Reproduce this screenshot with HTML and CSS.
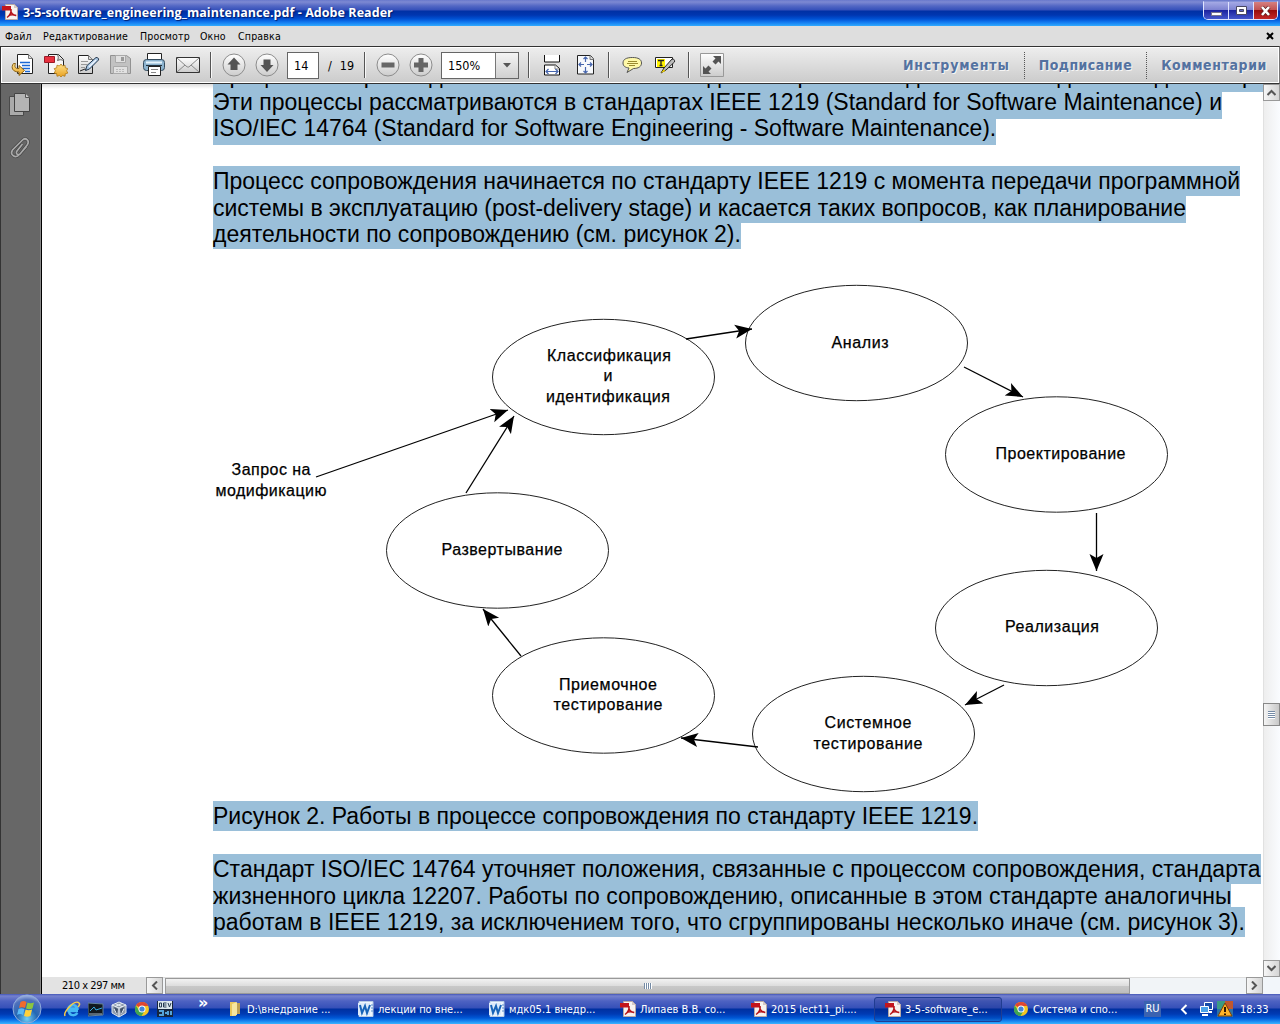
FILE: index.html
```html
<!DOCTYPE html>
<html lang="ru">
<head>
<meta charset="utf-8">
<title>3-5-software_engineering_maintenance.pdf - Adobe Reader</title>
<link rel="stylesheet" href="styles.css">
</head>
<body>
<svg class="defs" width="0" height="0">
  <defs>
    <linearGradient id="gray" x1="0" y1="0" x2="0" y2="1"><stop offset="0" stop-color="#fff"/><stop offset="1" stop-color="#ccc"/></linearGradient>
    <linearGradient id="gold" x1="0" y1="0" x2="0" y2="1"><stop offset="0" stop-color="#ffe28a"/><stop offset="1" stop-color="#e8a020"/></linearGradient>
    <radialGradient id="orb" cx=".5" cy=".85" r=".9"><stop offset="0" stop-color="#6fd0f8"/><stop offset=".4" stop-color="#2467b4"/><stop offset=".75" stop-color="#4f70bc"/><stop offset="1" stop-color="#c4d0f0"/></radialGradient>
    <symbol id="pdf" viewBox="0 0 16 16"><path d="M3.5.5h9l3 3v12h-12z" fill="#f7f3f0" stroke="#b9a9a5"/><path d="M12 .5v3.5h3.500z" fill="#d4c8c4"/><path d="M0 2h9v4.500H0z" fill="#c3151c"/><path d="M5 13.500c3-2 4.500-5 4-8.500M8.800 6c0 3 2.500 5 5.500 5.500M6 12.500c2-2 5-2 8-1" fill="none" stroke="#b51218" stroke-width="1.500"/></symbol>
    <symbol id="word" viewBox="0 0 16 16"><path d="M1 .5h14v15H1z" fill="#eef5fd" stroke="#b7cbe4"/><path d="M0 2h12v12H0z" fill="#dceafa"/><path d="M2 4l2 8 3-7 2 7 3-8" fill="none" stroke="#1763b8" stroke-width="2"/><path d="M13 4h2M13 7h2M13 10h2" stroke="#5c91ce"/></symbol>
    <symbol id="chrome" viewBox="0 0 16 16"><circle cx="8" cy="8" r="7" fill="#f3c623"/><path d="M8 8L2 4.300A7 7 0 0 1 14.300 5H8z" fill="#df4632"/><path d="M1.800 4.600A7 7 0 0 0 7.500 15l3.200-5.500L8 8 5 9.500z" fill="#3fa652"/><circle cx="8" cy="8" r="3.500" fill="#fff"/><circle cx="8" cy="8" r="2.600" fill="#4285d8"/></symbol>
  </defs>
</svg>
<div class="window">
  <header class="titlebar">
    <svg class="app-icon" width="16" height="16"><use href="#pdf"/></svg>
    <h1>3-5-software_engineering_maintenance.pdf - Adobe Reader</h1>
    <div class="win-buttons">
      <span class="wb"><svg width="24" height="17"><rect x="7.500" y="10.500" width="10" height="3" fill="#fff" stroke="#77738e"/></svg></span>
      <span class="wb"><svg width="24" height="17"><path d="M7.500 4.500h10v8h-10z" fill="#fff" stroke="#4a4862"/><path d="M10.500 7.500h4v2h-4z" fill="#5a64c0" stroke="#4a4862"/></svg></span>
      <span class="wb close"><svg width="23" height="17"><path d="M8 5l7 8M15 5l-7 8" stroke="#5d2020" stroke-width="4"/><path d="M8 5l7 8M15 5l-7 8" stroke="#fff" stroke-width="2.600"/></svg></span>
    </div>
  </header>
  <nav class="menubar">
    <span class="m1">Файл</span><span class="m2">Редактирование</span><span class="m3">Просмотр</span><span class="m4">Окно</span><span class="m5">Справка</span>
    <svg class="doc-close" width="8" height="8"><path d="M1 1l6 6M7 1L1 7" stroke="#000" stroke-width="2"/></svg>
  </nav>
  <div class="toolbar">
    <div class="tools files">
      <svg width="24" height="24"><path d="M6.500 1.500h11l4 4v15h-15z" fill="#fff" stroke="#222"/><path d="M17.500 1.500v4h4" fill="#ddd" stroke="#777"/><path d="M9 9.500h10M11 12.500h8M10 15.500h9M14 18.500h5" stroke="#1c69d4" stroke-width="1.500"/><path d="M4.500 10.500h-2c-3 4-1 8.500 5.500 8.500v3.500l5.500-5-5.500-5v3c-3.500.5-5-1.500-3.500-5z" fill="url(#gold)" stroke="#8c6419"/></svg>
      <svg width="24" height="24"><path d="M4.500 1.500h10l5 5v14h-15z" fill="#f8f8f8" stroke="#222"/><path d="M13.500 1.500c1 2 1 4 0 6 2-1 4-1 6 0" fill="#ddd" stroke="#666"/><path d="M.5 3.500h10v6H.5z" fill="#e8313f" stroke="#9c1b28"/><path d="M17 11l1.600 2 2.400-.8.300 2.600 2.500.8-1.200 2.200 1.200 2.300-2.500.6-.3 2.600-2.400-.8-1.600 1.500-1.600-1.500-2.400.8-.3-2.600-2.500-.6 1.200-2.300-1.200-2.200 2.500-.8.300-2.600 2.400.8z" fill="url(#gold)" stroke="#b07a18" stroke-width=".8"/></svg>
      <svg width="24" height="24"><path d="M1.500 2.500h10l4 4v14h-14z" fill="url(#gray)" stroke="#222"/><path d="M11.500 2.500v4h4" fill="#ddd" stroke="#777"/><path d="M4 8.500h7M4 11.500h6M4 14.500h4" stroke="#999"/><path d="M3 18l5-2 2 1" fill="none" stroke="#222"/><path d="M8.500 17.500l1.500-5 9-8c2 0 3 1 2.500 2.500l-9 9z" fill="#a9c7e4" stroke="#26394d"/><path d="M12 14l7-7" stroke="#eef6ff" stroke-width="1.500"/></svg>
      <svg width="24" height="24"><path d="M.5 2.500h16l4 3v15H.5z" fill="#c2c2c2" stroke="#929292"/><path d="M5.500 2.500h10v7h-10zM3.500 13.500h14v7h-14z" fill="#e1e1e1" stroke="#aaa"/><path d="M11 4h3v4h-3z" fill="#999"/><path d="M6 16.500h9M6 18.500h9" stroke="#bbb" stroke-dasharray="2 1"/></svg>
      <svg width="24" height="24"><path d="M4.500.5h14v9h-14z" fill="#fff" stroke="#222"/><rect x=".5" y="6.500" width="21" height="11" rx="3" fill="#8cb3cf" stroke="#344b5d"/><path d="M3 9.500h16" stroke="#e6f4fc" stroke-width="2"/><path d="M3 12.500h16" stroke="#24333e"/><path d="M5.500 13.500h12v9h-12z" fill="#fff" stroke="#222"/><path d="M8 16.500h7M8 19.500h5" stroke="#888"/></svg>
      <svg width="26" height="24"><path d="M.5 4.500h23v15H.5z" fill="url(#gray)" stroke="#333"/><path d="M1 5l9 8c2 1.500 2.500 1.500 4 0l9-8M1 19l8-7M23 19l-8-7" fill="none" stroke="#888"/></svg>
    </div>
    <i class="sep"></i>
    <svg class="round" width="24" height="24"><circle cx="12" cy="12" r="11" fill="url(#gray)" stroke="#8c8c8c"/><path d="M12 4.500l6.500 7h-3V17h-7v-5.500h-3z" fill="#555"/></svg>
    <svg class="round second" width="24" height="24"><circle cx="12" cy="12" r="11" fill="url(#gray)" stroke="#8c8c8c"/><path d="M12 19l6.500-7h-3V6.500h-7V12h-3z" fill="#555"/></svg>
    <div class="page-no">14</div><div class="page-total"><span>/</span><span>19</span></div>
    <i class="sep s2"></i>
    <svg class="round" width="24" height="24"><circle cx="12" cy="12" r="11" fill="url(#gray)" stroke="#8c8c8c"/><path d="M5.500 9.500h13v5h-13z" fill="#666"/></svg>
    <svg class="round second" width="24" height="24"><circle cx="12" cy="12" r="11" fill="url(#gray)" stroke="#8c8c8c"/><path d="M9.500 5h5v4.500H19v5h-4.500V19h-5v-4.500H5v-5h4.500z" fill="#666"/></svg>
    <div class="zoom"><span>150%</span><b><svg width="8" height="5"><path d="M0 0h8L4 4.500z" fill="#555"/></svg></b></div>
    <i class="sep s3"></i>
    <svg class="fitw" width="18" height="22"><path d="M1.500 1v7h15V1" fill="#fff" stroke="#111"/><path d="M1.500 21v-10h11l4 3.500V21z" fill="#fff" stroke="#111"/><path d="M12 11v4h4" fill="none" stroke="#888"/><path d="M3 17.500h12M5.500 15L3 17.500 5.500 20M12.500 15l2.500 2.500-2.500 2.500" fill="none" stroke="#4766ae" stroke-width="1.200"/></svg>
    <svg class="fitp" width="18" height="22"><path d="M.5 1.500h13l3 3.500v15H.5z" fill="#f7f9fc" stroke="#222"/><path d="M13 1.500v4h3.500" fill="#ddd" stroke="#777"/><path d="M8.500 3v5M8.500 13v6M2 10.500h5M10 10.500h5M6.500 5l2-2 2 2M6.500 17l2 2 2-2M4 8.500l-2 2 2 2M13 8.500l2 2-2 2" fill="none" stroke="#4766ae" stroke-width="1.200"/></svg>
    <i class="sep s4"></i>
    <svg class="note" width="21" height="20"><path d="M10.500 2.500c6 0 9 2 9 5.500s-3 5.500-8 5.500L5 17.500l2-4.500c-4-.5-6-2-6-5 0-3.500 3-5.500 9.500-5.500z" fill="#fff9a8" stroke="#555"/><path d="M6 6.500h9M5 8.500h11M7 10.500h6" stroke="#9a8a30"/></svg>
    <svg class="mark" width="22" height="20"><path d="M.5 2.500h17v10H.5z" fill="#fff" stroke="#222"/><path d="M2 4h8v8H2z" fill="#fff200"/><path d="M3 5.500h6M6 5v6M4.500 10.500h3" stroke="#222" stroke-width="1.300"/><path d="M6 18l3-5 8-9c2 0 3 1 2.500 3L11 15z" fill="#bbb" stroke="#222"/><path d="M6 18l2.500-3.500 2 1.500z" fill="#f0d000"/></svg>
    <i class="sep s5"></i>
    <svg class="full" width="24" height="24"><path d="M.5.5h23v23H.5z" fill="url(#gray)" stroke="#999"/><path d="M21 3v8l-2.500-2.500-3 3-3-3 3-3L13 3zM3 21v-8l2.500 2.500 3-3 3 3-3 3L11 21z" fill="#555"/></svg>
    <div class="panels"><span class="t1">Инструменты</span><span class="t2">Подписание</span><span class="t3">Комментарии</span></div>
  </div>
  <main class="reader">
    <aside class="rail">
      <svg width="22" height="24"><path d="M.5 3.500h14v19H.5z" fill="#aaa" stroke="#4a4a4a"/><path d="M5.500.5h11l4 4v14h-15z" fill="#b4b4b4" stroke="#444"/><path d="M16.500.5v4h4" fill="#ccc" stroke="#555"/></svg>
      <svg class="clip" width="22" height="25"><path d="M13.500 8l-5.500 7c-2 3 1.500 5 3.500 2.500l7-9c2.500-4-2-7.500-5-4.500L3.500 14c-3 5 3 9 7 4.500l7-8" fill="none" stroke="#444" stroke-width="3"/><path d="M13.500 8l-5.500 7c-2 3 1.500 5 3.500 2.500l7-9c2.500-4-2-7.500-5-4.500L3.500 14c-3 5 3 9 7 4.500l7-8" fill="none" stroke="#aaa" stroke-width="1.700"/></svg>
    </aside>
    <div class="viewer">
      <article class="page">
        <div class="para first"><p class="l1">Процессы сопровождения обычно полностью должны решать задачи анализа для наладки и опроса</p><p class="l2">Эти процессы рассматриваются в стандартах IEEE 1219 (Standard for Software Maintenance) и</p><p class="l3">ISO/IEC 14764 (Standard for Software Engineering - Software Maintenance).</p></div>
        <div class="para"><p class="l4">Процесс сопровождения начинается по стандарту IEEE 1219 с момента передачи программной</p><p class="l5">системы в эксплуатацию (post-delivery stage) и касается таких вопросов, как планирование</p><p class="l6">деятельности по сопровождению (см. рисунок 2).</p></div>
        <svg class="diagram" width="1221" height="552" viewBox="42 249 1221 552">
          <defs><marker id="arrow" markerUnits="userSpaceOnUse" markerWidth="18" markerHeight="16" refX="17" refY="8" orient="auto"><path d="M0 1L17 8 0 15 4 8z"/></marker></defs>
          <g class="ovals"><ellipse cx="603.500" cy="377" rx="111" ry="57.700"/><ellipse cx="856.500" cy="343" rx="111" ry="57.700"/><ellipse cx="1056.500" cy="454.500" rx="111" ry="57.700"/><ellipse cx="1046.500" cy="628" rx="111" ry="57.700"/><ellipse cx="863.500" cy="734" rx="111" ry="57.700"/><ellipse cx="603.500" cy="695.500" rx="111" ry="57.700"/><ellipse cx="497.500" cy="550.500" rx="111" ry="57.700"/></g>
          <g class="arrows"><path d="M316 477L508 410"/><path d="M466 493L514 416"/><path d="M686 339L752 329"/><path d="M964 367L1023 397"/><path d="M1096.500 513V571"/><path d="M1004 685L965 705"/><path d="M758 747L681 738"/><path d="M521 656L483 609"/></g>
          <g class="labels">
            <text x="609" y="361" textLength="124">Классификация</text><text x="608" y="381">и</text><text x="608" y="402" textLength="124">идентификация</text>
            <text x="860" y="348" textLength="57">Анализ</text><text x="1060.500" y="459" textLength="130">Проектирование</text><text x="1052" y="632" textLength="94">Реализация</text>
            <text x="868" y="728" textLength="87">Системное</text><text x="868" y="748.500" textLength="109">тестирование</text>
            <text x="608" y="690" textLength="98">Приемочное</text><text x="608" y="710" textLength="109">тестирование</text>
            <text x="502" y="555" textLength="121">Развертывание</text><text x="271" y="475" textLength="79">Запрос на</text><text x="271" y="496" textLength="111">модификацию</text>
          </g>
        </svg>
        <div class="para caption"><p class="l7">Рисунок 2. Работы в процессе сопровождения по стандарту IEEE 1219.</p></div>
        <div class="para"><p class="l8">Стандарт ISO/IEC 14764 уточняет положения, связанные с процессом сопровождения, стандарта</p><p class="l9">жизненного цикла 12207. Работы по сопровождению, описанные в этом стандарте аналогичны</p><p class="l10">работам в IEEE 1219, за исключением того, что сгруппированы несколько иначе (см. рисунок 3).</p></div>
      </article>
      <div class="hbar">
        <span class="size">210 x 297 мм</span>
        <span class="sb"><svg width="7" height="9"><path d="M6 .5l-4 4 4 4" fill="none" stroke="#555" stroke-width="2"/></svg></span>
        <div class="htrack"><div class="hthumb"><i></i></div></div>
        <span class="sb"><svg width="7" height="9"><path d="M1 .5l4 4-4 4" fill="none" stroke="#555" stroke-width="2"/></svg></span>
      </div>
    </div>
    <div class="vbar">
      <span class="sb"><svg width="9" height="7"><path d="M.5 6l4-4 4 4" fill="none" stroke="#555" stroke-width="2"/></svg></span>
      <div class="vtrack"><div class="vthumb"><i></i></div></div>
      <span class="sb"><svg width="9" height="7"><path d="M.5 1l4 4 4-4" fill="none" stroke="#555" stroke-width="2"/></svg></span>
      <div class="corner"></div>
    </div>
  </main>
  <footer class="taskbar">
    <svg class="start" width="30" height="30"><circle cx="15" cy="15" r="14" fill="url(#orb)" stroke="#8facdc"/><path d="M8.500 8c2-1.500 4-1.500 6 0L13 14c-2-1-4-1-6 0z" fill="#ef6b2d"/><path d="M15.500 8.500c2 1 4 1 6.500 0L20.500 14.500c-2.500 1-4 1-6.500 0z" fill="#8cc63f"/><path d="M6.500 15c2-1 4-1 6 0L11 21c-2-1.500-4-1.500-6 0z" fill="#58b8f4"/><path d="M13.600 15.500c2 1 4 1 6.500 0L18.500 22c-2.500 1-4 1-6.500 0z" fill="#ffd13b"/></svg>
    <div class="quick">
      <svg width="17" height="17"><path d="M14 10H4.500a4.200 4.200 0 1 1 8.800-2.500H5" fill="none" stroke="#45b9f5" stroke-width="2.700"/><path d="M5 11c1 4 6 4 8.500 1" fill="none" stroke="#45b9f5" stroke-width="2.500"/><path d="M1 15C-1 11 11-2 15 2c1 1 0 3-1 4" fill="none" stroke="#f8cc45" stroke-width="1.500"/></svg>
      <svg width="16" height="16"><path d="M0 2l15 1v11l-15 1z" fill="#11191f" stroke="#65849b"/><path d="M2 10l4-4 2 3 6-2" fill="none" stroke="#37aadd"/><path d="M1 13h13" stroke="#a2b7c8"/></svg>
      <svg width="16" height="17"><path d="M1 4l7-3 7 3v8l-7 4-7-4z" fill="#8d9aab" stroke="#dce4ee"/><path d="M1 4l7 3 7-3M8 7v9M4 2.500l7 3M11 2.500l-7 3M3 8l3 5M13 8l-3 5" fill="none" stroke="#e7edf5"/><path d="M3 6l3 7 1-5zM13 6l-3 7-1-5z" fill="#405068"/></svg>
      <svg width="16" height="16"><use href="#chrome"/></svg>
      <svg class="dev" width="17" height="17"><path d="M0 0h16v16H0z" fill="#17263c"/><path d="M1 0h14v8H1z" fill="#dce7ed"/><path d="M2.500 2v4h2V2zM9.500 2H6.500v4h3M6.500 4h3M11 2l1.500 4L14 2" fill="none" stroke="#263b52"/><path d="M2 10h4v4H2M8 12h2M14 10v4M11 10v4" fill="none" stroke="#55a4d8" stroke-width="2"/></svg>
    </div>
    <span class="more">»</span>
    <div class="tasks">
      <div class="task k1"><svg width="16" height="16"><path d="M3 1h6v14H3z" fill="#e9c75d"/><path d="M9 2h4v11H9z" fill="#bfa054"/><path d="M5 3l5-2v13l-5 1z" fill="#f7e6a0"/></svg><span>D:\внедрание ...</span></div>
      <div class="task k2"><svg width="16" height="16"><use href="#word"/></svg><span>лекции по вне...</span></div>
      <div class="task k3"><svg width="16" height="16"><use href="#word"/></svg><span>мдк05.1 внедр...</span></div>
      <div class="task k4"><svg width="16" height="16"><use href="#pdf"/></svg><span>Липаев В.В. со...</span></div>
      <div class="task k5"><svg width="16" height="16"><use href="#pdf"/></svg><span>2015 lect11_pi....</span></div>
      <div class="task k6 active"><svg width="16" height="16"><use href="#pdf"/></svg><span>3-5-software_e...</span></div>
      <div class="task k7"><svg width="16" height="16"><use href="#chrome"/></svg><span>Система и спо...</span></div>
    </div>
    <span class="lang">RU</span>
    <svg class="chev" width="8" height="11"><path d="M6.500 1L2 5.500 6.500 10" fill="none" stroke="#fff" stroke-width="2"/></svg>
    <svg class="net" width="15" height="16"><path d="M5.500 1.500h8v7h-8z" fill="#164ba8" stroke="#fff"/><path d="M1.500 5.500h8v6h-8z" fill="#4ba3ea" stroke="#fff"/><path d="M3 14h6M10 11h3" stroke="#fff" stroke-width="2"/></svg>
    <svg class="warn" width="17" height="17"><path d="M0 0h8v8H0z" fill="#3b9a84"/><path d="M8 0h8v8H8z" fill="#bf572e"/><path d="M0 8h16v8H0z" fill="#2d72a5"/><path d="M8 2l7 13H1z" fill="#ffb329" stroke="#7a3e08"/><path d="M8 6v5M8 12.500v1.500" stroke="#321700" stroke-width="2"/></svg>
    <time>18:33</time>
  </footer>
</div>
</body>
</html>
```
FILE: styles.css
```css
* { box-sizing: border-box; }
body { margin: 0; font-family: "DejaVu Sans Condensed", "DejaVu Sans", sans-serif; font-stretch: condensed; font-size: 11px; color: #000; overflow: hidden; }
svg { display: block; flex: none; }
.defs { position: absolute; }
.window { width: 1280px; height: 1024px; display: flex; flex-direction: column; white-space: nowrap; }

.titlebar { height: 26px; flex: none; display: flex; align-items: flex-start; background: linear-gradient(#6878cc 0, #7d89d2 2px, #5267c4 6px, #3550ba 10px, #0030a4 11px, #0036b0 15px, #0052d4 19px, #1277ee 22px, #30aaff 26px); }
.app-icon { margin: 4px 0 0 2px; }
.titlebar h1 { margin: 4px 0 0 5px; font: bold 12.5px/18px "Open Sans", "Noto Sans", sans-serif; letter-spacing: .06px; color: #fff; text-shadow: 1px 1px 1px #001b6c; }
.win-buttons { margin: 1px 2px 0 auto; display: flex; border: 1px solid #dfe4ff; border-top-color: #8793d7; border-radius: 0 0 5px 5px; overflow: hidden; }
.wb { width: 25px; height: 17px; background: linear-gradient(#a5aae5, #7b80d0 48%, #1c24a0 50%, #4556cb); border-right: 1px solid #dfe4ff; }
.wb.close { width: 23px; border-right: 0; background: linear-gradient(#d68080, #c05050 48%, #980c0c 50%, #c42828); }

.menubar { height: 20px; flex: none; display: flex; align-items: center; background: #dedede; padding: 0 6px 0 5px; font-size: 10.500px; letter-spacing: .18px; }
.menubar .m1 { width: 38px; } .menubar .m2 { width: 97px; } .menubar .m3 { width: 60px; } .menubar .m4 { width: 38px; }
.doc-close { margin-left: auto; }

.toolbar { height: 38px; flex: none; display: flex; align-items: center; border: 1px solid #333; border-right-color: #777; box-shadow: inset 0 0 0 1px #fff; background: linear-gradient(#eee, #cbcbcb); }
.tools { display: flex; margin-left: 10px; }
.tools svg { margin-right: 9px; }
.tools svg:last-child { margin-right: 0; }
.sep { width: 2px; height: 26px; background: #555; border-right: 1px solid #f8f8f8; margin-left: 8px; flex: none; }
.round { margin-left: 10px; }
.round.second { margin-left: 9px; }
.page-no { width: 32px; height: 27px; margin-left: 8px; border: 1px solid #666; background: #fff; font-size: 12.500px; line-height: 26px; padding-left: 6px; }
.page-total { display: flex; gap: 8px; margin-left: 9px; font-size: 12.500px; width: 28px; }
.sep.s2 { margin-left: 8px; }
.zoom { width: 78px; height: 27px; margin-left: 8px; display: flex; border: 1px solid #666; background: #fff; font-size: 12.500px; line-height: 26px; }
.zoom span { width: 53px; padding-left: 6px; }
.zoom b { flex: 1; border-left: 1px solid #777; display: grid; place-items: center; background: linear-gradient(#f4f4f4, #d0d0d0); }
.sep.s3 { margin-left: 9px; }
.fitw { margin-left: 13px; } .fitp { margin-left: 16px; }
.sep.s4 { margin-left: 13px; }
.note { margin-left: 12px; } .mark { margin-left: 12px; }
.sep.s5 { margin-left: 11px; }
.full { margin-left: 10px; }
.panels { display: flex; margin-left: auto; margin-right: 12px; font: bold 14px/27px "DejaVu Sans Condensed", "DejaVu Sans", sans-serif; color: #5472a0; text-shadow: 1px 1px 0 #f5f5f5; }
.panels span + span { border-left: 1px dotted #555; margin-left: 14px; padding-left: 14px; }
.t1 { letter-spacing: .85px; } .t2 { letter-spacing: .45px; } .t3 { letter-spacing: .6px; }

.reader { flex: 1; min-height: 0; display: flex; }
.rail { width: 42px; flex: none; background: #676767; border-left: 1px solid #333; border-right: 1px solid #000; box-shadow: inset -1px 0 #888; padding: 9px 0 0 8px; }
.rail .clip { margin-top: 19px; }
.viewer { flex: 1; min-width: 0; display: flex; flex-direction: column; }
.page { flex: 1; min-height: 0; overflow: hidden; background: linear-gradient(#ddd, #fff 5px); }
.para { padding-left: 171px; height: 83px; font: 23px/26.600px "Liberation Sans", Arial, sans-serif; }
.para.first { margin-top: -22px; margin-bottom: 21px; }
.para p { margin: 0 0 -3.400px; padding-top: 2px; height: 30px; width: fit-content; background: #9abfd9; position: relative; }
.para.first p { padding-top: 0; }
.l3, .l5 { letter-spacing: -.025px; }
.para p:nth-child(1) { z-index: 3; } .para p:nth-child(2) { z-index: 2; } .para p:nth-child(3) { z-index: 1; }
.diagram { height: 552px; }
.ovals { fill: #fff; stroke: #222; stroke-width: 1; }
.arrows path { fill: none; stroke: #000; stroke-width: 1.300; marker-end: url(#arrow); }
.labels { font: 16px "Liberation Sans", Arial, sans-serif; text-anchor: middle; stroke: #000; stroke-width: .25; }
.para.caption { height: 53px; }

.hbar { height: 17px; flex: none; display: flex; background: #e3e3e3; }
.size { width: 104px; padding-left: 20px; line-height: 17px; letter-spacing: -.45px; }
.sb { width: 17px; height: 17px; flex: none; display: grid; place-items: center; border: 1px solid #999; background: linear-gradient(90deg, #f6f6f6, #d5d5d5); }
.htrack { flex: 1; padding-left: 2px; background: #f1f4f7; border-top: 1px solid #ddd; }
.hthumb { width: 965px; height: 16px; border: 1px solid #999; background: linear-gradient(#f2f2f2, #ddd 48%, #c8c8c8 52%, #bdbdbd); display: grid; place-items: center; }
.hthumb i { width: 8px; height: 6px; background: repeating-linear-gradient(90deg, #758ba5 0 1px, #fff 1px 2px); }
.vbar { width: 17px; flex: none; display: flex; flex-direction: column; background: #f3f5f8; }
.vtrack { flex: 1; border-left: 1px solid #e1e1e1; background: linear-gradient(90deg, #eee, #fafcff); padding-top: 602px; }
.vthumb { height: 23px; margin-left: -1px; border: 1px solid #888; background: linear-gradient(90deg, #f4f4f4, #c8c8c8); display: grid; place-items: center; }
.vthumb i { width: 7px; height: 8px; background: repeating-linear-gradient(#758ba5 0 1px, #fff 1px 2px); }
.corner { height: 17px; background: #f2f6fa; }

.taskbar { height: 30px; flex: none; display: flex; align-items: center; color: #fff; background: linear-gradient(#4457b8 0, #7582cf 2px, #4e62c2 7px, #3550b8 14px, #0030a0 15px, #003bb4 20px, #0058d6 24px, #1784f0 27px, #39b4ff 30px); }
.start { margin-left: 12px; }
.quick { display: flex; margin-left: 22px; gap: 7px; width: 116px; }
.more { margin: -12px 0 0 18px; font: bold 16px/16px "DejaVu Sans", sans-serif; width: 29px; }
.tasks { display: flex; }
.task { width: 131px; height: 25px; padding-left: 7px; display: flex; align-items: center; gap: 4px; }
.task:first-child { padding-left: 0; width: 124px; }
.task.k6 { width: 128px; margin-left: -1px; padding-left: 10px; border: 1px solid #203c91; border-radius: 3px; background: rgba(0, 20, 100, .18); }
.task.k7 { width: 125px; padding-left: 11px; }
.lang { width: 17px; height: 16px; line-height: 16px; margin-left: 17px; background: #3a62b0; text-align: center; }
.chev { margin-left: 19px; } .net { margin-left: 11px; } .warn { margin-left: 3px; }
time { margin-left: 6px; }
```
